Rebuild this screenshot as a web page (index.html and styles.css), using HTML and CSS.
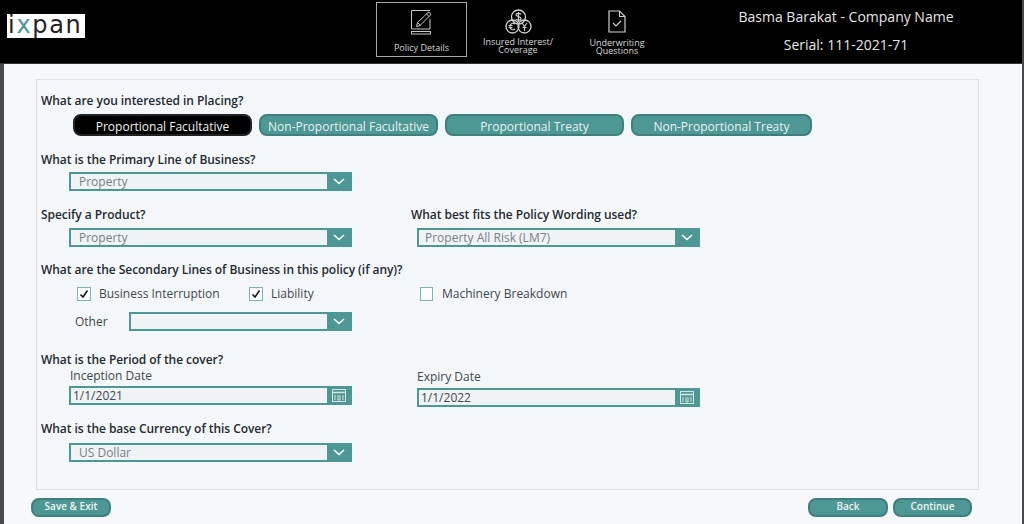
FILE: index.html
```html
<!DOCTYPE html>
<html lang="en">
<head>
<meta charset="utf-8">
<title>Policy Details</title>
<link rel="stylesheet" href="styles.css">
</head>
<body>
<header class="topbar">
  <div class="logo"><span>i</span><span class="logo-x">x</span><span>pan</span></div>
  <nav class="tabs">
    <a class="tab tab-active">
      <svg class="tab-icon" width="24" height="26" viewBox="0 0 24 26" fill="none" stroke="#c9c9c9" stroke-width="1">
        <path d="M20 1.500H1.500V20H20V10"/>
        <rect x="1.500" y="22.500" width="19" height="2.500"/>
        <path d="M6.500 17.500l1-4L18 3.500c1-1 3.500 1.500 2.500 2.500L10 16.500z"/>
        <path d="M16.500 5l2.500 2.500M7.500 13.500l3 3"/>
      </svg>
      <span class="tab-label">Policy Details</span>
    </a>
    <a class="tab tab-money">
      <svg class="tab-icon" width="27" height="26" viewBox="0 0 27 26" fill="none" stroke="#d0d0d0" stroke-width="1.300">
        <circle cx="13.500" cy="8" r="7"/>
        <circle cx="7.500" cy="17.500" r="6.500"/>
        <circle cx="19.500" cy="17.500" r="6.500"/>
        <path d="M16 5.500c-1-1.500-5-1.500-5 .5s5 1 5 3.500-4 2-5 .5M13.500 3v10" stroke-width="1.200"/>
        <path d="M10 15c-2-1.500-5-.5-5 2.500s3 4 5 2.500M3.500 16.500h4M3.500 18.500h4" stroke-width="1.100"/>
        <path d="M17 14l2.500 3.500L22 14M19.500 17.500V22M17.500 18.500h4" stroke-width="1.100"/>
      </svg>
      <span class="tab-label tab-label-two">Insured Interest/<br>Coverage</span>
    </a>
    <a class="tab tab-uw">
      <svg class="tab-icon" width="18" height="23" viewBox="0 0 18 23" fill="none" stroke="#d0d0d0" stroke-width="1.200">
        <path d="M1 1h10.500L17 6.500V22H1z"/>
        <path d="M11.500 1v5.500H17"/>
        <path d="M5 13l3 3 5-5"/>
      </svg>
      <span class="tab-label tab-label-two">Underwriting<br>Questions</span>
    </a>
  </nav>
  <div class="user">
    <div>Basma Barakat - Company Name</div>
    <div>Serial: 111-2021-71</div>
  </div>
</header>

<main class="page">
  <section class="panel">
    <h2 class="question q-placing">What are you interested in Placing?</h2>
    <div class="pills">
      <button class="pill pill-selected">Proportional Facultative</button>
      <button class="pill">Non-Proportional Facultative</button>
      <button class="pill">Proportional Treaty</button>
      <button class="pill pill-wide">Non-Proportional Treaty</button>
    </div>

    <h2 class="question q-primary">What is the Primary Line of Business?</h2>
    <div class="field field-indent">
      <span class="field-value">Property</span>
      <span class="field-btn"><svg width="12" height="7" viewBox="0 0 12 7" fill="none" stroke="#fff" stroke-width="1.600"><path d="M1 1l5 4.500L11 1"/></svg></span>
    </div>

    <div class="two-col row-product">
      <div>
        <h2 class="question">Specify a Product?</h2>
        <div class="field field-indent field-product">
          <span class="field-value">Property</span>
          <span class="field-btn"><svg width="12" height="7" viewBox="0 0 12 7" fill="none" stroke="#fff" stroke-width="1.600"><path d="M1 1l5 4.500L11 1"/></svg></span>
        </div>
      </div>
      <div>
        <h2 class="question">What best fits the Policy Wording used?</h2>
        <div class="field field-right field-product">
          <span class="field-value">Property All Risk (LM7)</span>
          <span class="field-btn"><svg width="12" height="7" viewBox="0 0 12 7" fill="none" stroke="#fff" stroke-width="1.600"><path d="M1 1l5 4.500L11 1"/></svg></span>
        </div>
      </div>
    </div>

    <h2 class="question q-secondary">What are the Secondary Lines of Business in this policy (if any)?</h2>
    <div class="checks">
      <label class="check check-bi"><span class="box"><svg width="10" height="10" viewBox="0 0 10 10" fill="none" stroke="#111" stroke-width="1.500"><path d="M1.500 5.500l2.500 2.500 4.500-6.500"/></svg></span>Business Interruption</label>
      <label class="check check-li"><span class="box"><svg width="10" height="10" viewBox="0 0 10 10" fill="none" stroke="#111" stroke-width="1.500"><path d="M1.500 5.500l2.500 2.500 4.500-6.500"/></svg></span>Liability</label>
      <label class="check check-mb"><span class="box box-empty"></span>Machinery Breakdown</label>
    </div>
    <div class="other-row">
      <span class="other-label">Other</span>
      <div class="field field-other">
        <span class="field-value"></span>
        <span class="field-btn"><svg width="12" height="7" viewBox="0 0 12 7" fill="none" stroke="#fff" stroke-width="1.600"><path d="M1 1l5 4.500L11 1"/></svg></span>
      </div>
    </div>

    <h2 class="question q-period">What is the Period of the cover?</h2>
    <div class="two-col row-dates">
      <div>
        <div class="sub-label sub-inception">Inception Date</div>
        <div class="field field-indent">
          <span class="field-value field-date">1/1/2021</span>
          <span class="field-btn"><svg width="14" height="13" viewBox="0 0 14 13" fill="none" stroke="#d5e6e5"><rect x=".5" y=".5" width="13" height="12"/><path d="M.5 3.500h13" stroke-width="1.500"/><path d="M3 6v5M6 6v5h2V6M11 6v5" stroke-width="1"/></svg></span>
        </div>
      </div>
      <div class="col-expiry">
        <div class="sub-label sub-expiry">Expiry Date</div>
        <div class="field field-right">
          <span class="field-value field-date">1/1/2022</span>
          <span class="field-btn"><svg width="14" height="13" viewBox="0 0 14 13" fill="none" stroke="#d5e6e5"><rect x=".5" y=".5" width="13" height="12"/><path d="M.5 3.500h13" stroke-width="1.500"/><path d="M3 6v5M6 6v5h2V6M11 6v5" stroke-width="1"/></svg></span>
        </div>
      </div>
    </div>

    <h2 class="question q-currency">What is the base Currency of this Cover?</h2>
    <div class="field field-indent">
      <span class="field-value">US Dollar</span>
      <span class="field-btn"><svg width="12" height="7" viewBox="0 0 12 7" fill="none" stroke="#fff" stroke-width="1.600"><path d="M1 1l5 4.500L11 1"/></svg></span>
    </div>
  </section>

  <footer class="actions">
    <button class="action action-save">Save &amp; Exit</button>
    <div class="actions-right">
      <button class="action action-back">Back</button>
      <button class="action action-continue">Continue</button>
    </div>
  </footer>
</main>
</body>
</html>
```

FILE: styles.css
```css
* { box-sizing: border-box; }

html, body {
  margin: 0;
  height: 524px;
  overflow: hidden;
}

body {
  background: #f6f8fa;
  border-right: 2px solid #4a4a4a;
  font-family: "Open Sans", sans-serif;
  color: #333;
  position: relative;
}

.topbar {
  height: 64px;
  background: #000;
  display: flex;
  align-items: flex-start;
  border-bottom: 1px solid #333;
  color: #e6e6e6;
}

.logo {
  width: 78px;
  height: 24px;
  margin: 14px 0 0 7px;
  background: #fff;
  color: #222;
  font-family: "DejaVu Sans", sans-serif;
  font-size: 24px;
  line-height: 23px;
  letter-spacing: 1.700px;
  padding-left: 1px;
  white-space: nowrap;
}

.logo-x { color: #4d9794; }

.tabs {
  display: flex;
  margin: 2px 0 0 291px;
}

.tab {
  width: 91px;
  height: 55px;
  border: 1px solid transparent;
  display: flex;
  flex-direction: column;
  align-items: center;
  color: #d8d8d8;
}

.tab-active {
  border-color: #a8a8a8;
  padding-top: 6px;
}

.tab-money {
  width: 104px;
  padding-top: 6px;
  margin-left: -1px;
}

.tab-uw {
  width: 94px;
  padding-top: 7px;
}

.tab-icon { display: block; flex: none; }

.tab-label {
  font-size: 9px;
  line-height: 8px;
  text-align: center;
  white-space: nowrap;
}

.tab-active .tab-label { margin-top: 7px; line-height: 12px; }
.tab-money .tab-label { margin-top: 3px; }
.tab-uw .tab-label { margin-top: 6px; }

.user {
  width: 260px;
  margin-left: 52px;
  padding-top: 7px;
  font-size: 14px;
  line-height: 20px;
  text-align: center;
}

.user div + div { margin-top: 8px; }

.page {
  margin-left: 4px;
  height: 460px;
}

body::before {
  content: "";
  position: absolute;
  left: 0;
  top: 64px;
  bottom: 0;
  width: 4px;
  background: #4a4a4a;
}

.panel {
  margin: 15px 0 0 32px;
  width: 943px;
  height: 411px;
  background: #f4f7f9;
  border: 1px solid #dfe2e4;
  padding: 0 0 0 4px;
}

.question {
  margin: 0;
  font-size: 12px;
  font-weight: 600;
  letter-spacing: -.05px;
  line-height: 16px;
  color: #222a33;
  white-space: nowrap;
}

.q-placing { margin-top: 13px; }

.pills {
  display: flex;
  gap: 7px;
  margin: 5px 0 0 32px;
}

.pill {
  width: 179px;
  height: 22px;
  padding: 3px 0 0;
  border: 2px solid #3f7f7c;
  border-radius: 8px;
  background: #4d9794;
  color: #e8f2f1;
  font: 400 12px/14px "Open Sans", sans-serif;
}

.pill-selected {
  background: #000;
  border-color: #222;
  color: #f0f0f0;
}

.pill-wide { width: 181px; }

.q-primary { margin-top: 16px; }

.field {
  height: 19px;
  display: flex;
  border: 2px solid #4d9794;
  background: #4d9794;
  width: 283px;
}

.field-indent { margin: 4px 0 0 28px; }
.field-right { margin: 5px 0 0 6px; }
.field-product { margin-top: 5px; }

.field-value {
  flex: 1;
  background: #eff3f6;
  color: #777f85;
  font-size: 12px;
  line-height: 15px;
  padding-left: 8px;
}

.field-right .field-value { padding-left: 6px; }

.field-date,
.field-right .field-date {
  color: #3d4750;
  padding-left: 2px;
}

.field-btn {
  width: 23px;
  flex: none;
  display: flex;
  align-items: center;
  justify-content: center;
  background: #4d9794;
}

.two-col {
  display: grid;
  grid-template-columns: 370px 1fr;
}

.row-product { margin-top: 16px; }

.q-secondary { margin-top: 15px; }

.checks {
  display: flex;
  margin: 8px 0 0 36px;
  height: 16px;
}

.check {
  display: flex;
  align-items: center;
  font-size: 12px;
  line-height: 16px;
  color: #3d4750;
  white-space: nowrap;
}

.check-bi { width: 172px; }
.check-li { width: 171px; }

.box {
  width: 14px;
  height: 14px;
  margin-right: 8px;
  border: 1px solid #7fb3b1;
  background: #fbfcfd;
  display: flex;
  align-items: center;
  justify-content: center;
}

.box-empty { width: 13px; margin-right: 9px; }

.other-row {
  display: flex;
  align-items: center;
  margin: 10px 0 0 34px;
}

.other-label {
  width: 54px;
  font-size: 12px;
  color: #3d4750;
}

.field-other { width: 223px; margin: 0; }

.q-period { margin-top: 21px; }

.sub-label {
  font-size: 12px;
  line-height: 16px;
  color: #3d4750;
  margin-left: 29px;
}

.sub-expiry { margin-left: 6px; margin-top: 1px; }
.row-dates .field { margin-top: 2px; }
.row-dates .field-right { margin-top: 3px; }

.q-currency { margin-top: 14px; }

.q-currency + .field { margin-top: 6px; }

.actions {
  display: flex;
  justify-content: space-between;
  margin: 8px 0 0 27px;
  width: 941px;
}

.actions-right { display: flex; gap: 5px; }

.action {
  height: 19px;
  padding: 0 0 3px;
  border: 2px solid #3f7f7c;
  border-radius: 8px;
  background: #4d9794;
  color: #eef5f5;
  font: 600 10px/11px "Open Sans", sans-serif;
}

.action-save { width: 80px; }
.action-back { width: 80px; }
.action-continue { width: 79px; }
```
